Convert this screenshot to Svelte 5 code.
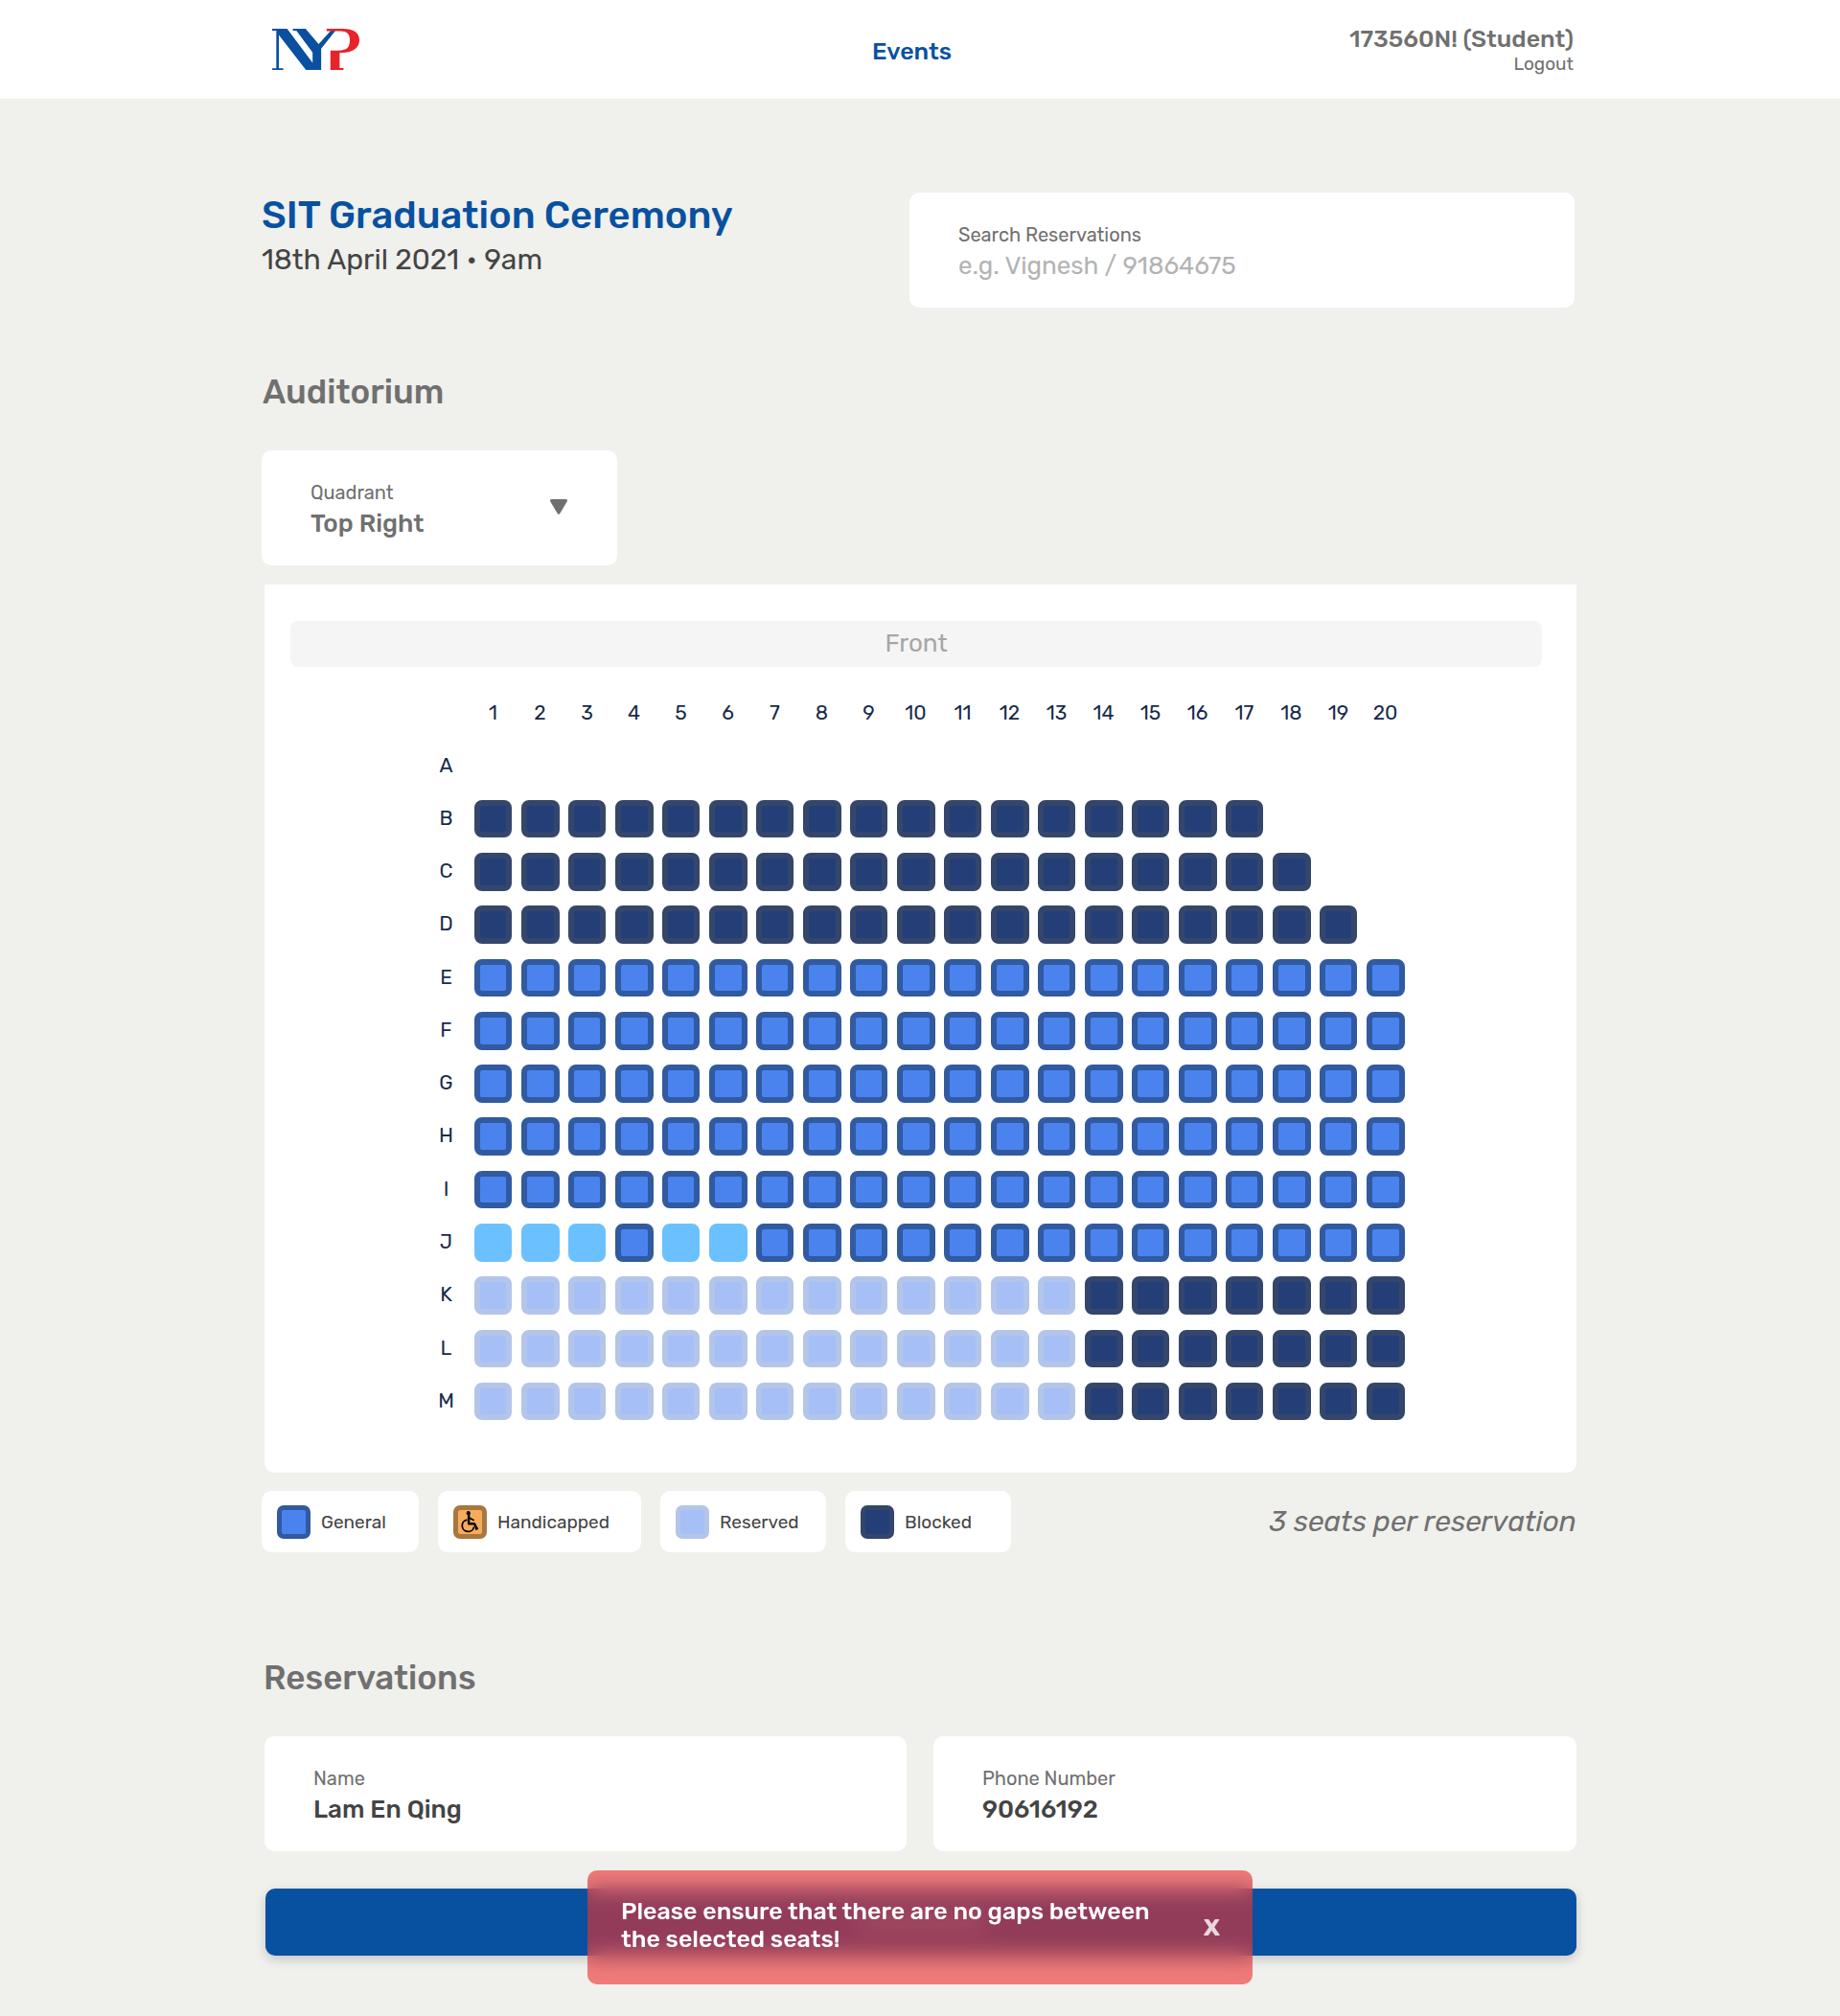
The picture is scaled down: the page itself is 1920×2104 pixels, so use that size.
<script>
  const columns = Array.from({ length: 20 }, (_, i) => i + 1);

  const fill = (kind, count) => Array(count).fill(kind);

  const rows = [
    { name: 'A', seats: [] },
    { name: 'B', seats: fill('blocked', 17) },
    { name: 'C', seats: fill('blocked', 18) },
    { name: 'D', seats: fill('blocked', 19) },
    ...['E', 'F', 'G', 'H', 'I'].map((name) => ({ name, seats: fill('general', 20) })),
    {
      name: 'J',
      seats: [
        ...fill('selected', 3),
        ...fill('general', 1),
        ...fill('selected', 2),
        ...fill('general', 14)
      ]
    },
    ...['K', 'L', 'M'].map((name) => ({
      name,
      seats: [...fill('reserved', 13), ...fill('blocked', 7)]
    }))
  ];

  const legend = [
    { kind: 'general', label: 'General' },
    { kind: 'handicapped', label: 'Handicapped' },
    { kind: 'reserved', label: 'Reserved' },
    { kind: 'blocked', label: 'Blocked' }
  ];
</script>

<div class="page">
  <header>
    <div class="bar">
      <svg class="logo" viewBox="42 29 274 129" role="img" aria-label="NYP">
        <g fill="#0b4fa1">
          <path d="M42 29H89L169 136V103L118 35H107V29H147L188 77L226 35H241L196 91V158H148L63 48V153H77V158H42V153H55V35H42Z" />
        </g>
        <path
          fill="#e8232a"
          d="M213 29H265C298 29 316 42 316 64C316 88 297 103 262 104H254V152H266V158H225V97H250C276 97 286 88 286 64C286 44 276 36 258 36H213Z"
        />
      </svg>
      <nav>Events</nav>
      <div class="account">
        <div class="user">173560N! (Student)</div>
        <div class="logout">Logout</div>
      </div>
    </div>
  </header>

  <main>
    <section class="intro">
      <div class="heading">
        <h1>SIT Graduation Ceremony</h1>
        <p class="date">18th April 2021 • 9am</p>
      </div>
      <div class="field search">
        <span class="label">Search Reservations</span>
        <span class="value placeholder">e.g. Vignesh / 91864675</span>
      </div>
    </section>

    <h2>Auditorium</h2>
    <div class="field quadrant">
      <div>
        <span class="label">Quadrant</span>
        <span class="value muted">Top Right</span>
      </div>
      <svg class="caret" viewBox="0 0 18 16">
        <path d="M2 0H16Q19 0 17.5 2.7L10.4 14.8Q9 17 7.6 14.8L0.5 2.7Q-1 0 2 0Z" fill="#707070" />
      </svg>
    </div>

    <section class="hall">
      <div class="front">Front</div>
      <div class="map">
        <div class="row numbers">
          <span></span>
          {#each columns as n}
            <span class="number">{n}</span>
          {/each}
        </div>
        {#each rows as row}
          <div class="row">
            <span class="letter">{row.name}</span>
            {#each row.seats as kind}
              <span class="seat {kind}"></span>
            {/each}
          </div>
        {/each}
      </div>
    </section>

    <section class="below">
      <div class="legend">
        {#each legend as item}
          <div class="key {item.kind}-key">
            <span class="swatch {item.kind}">
              {#if item.kind === 'handicapped'}
                <svg viewBox="654 291 72 72" fill="none" stroke="#000" stroke-width="5">
                  <circle cx="685" cy="300" r="6" fill="#000" stroke="none" />
                  <path d="M686 305V332H703L711 348" stroke-width="7" stroke-linejoin="round" />
                  <path d="M687 314L702 322" stroke-width="5" />
                  <path d="M681 320A18 18 0 1 0 702 341" stroke-width="5" />
                  <path d="M706 349L714 346" stroke-width="5" />
                </svg>
              {/if}
            </span>
            <span>{item.label}</span>
          </div>
        {/each}
      </div>
      <em>3 seats per reservation</em>
    </section>

    <h2 class="second">Reservations</h2>
    <section class="people">
      <div class="field">
        <span class="label">Name</span>
        <span class="value">Lam En Qing</span>
      </div>
      <div class="field">
        <span class="label">Phone Number</span>
        <span class="value">90616192</span>
      </div>
    </section>

    <section class="action">
      <div class="submit"><span class="sheen"></span></div>
      <div class="toast">
        <p>Please ensure that there are no gaps between the selected seats!</p>
        <span class="close">X</span>
      </div>
    </section>
  </main>
</div>

<style>
  :global(body) {
    margin: 0;
    background: #f0f0ec;
  }

  .page {
    min-height: 2104px;
    background: #f0f0ec;
    font-family: Rubik, Inter, 'Liberation Sans', sans-serif;
    color: #707070;
  }

  h1,
  h2,
  p {
    margin: 0;
    font-weight: 500;
  }

  header {
    height: 103px;
    background: #fff;
  }

  .bar {
    width: 1369px;
    margin-left: 273px;
    display: grid;
    grid-template-columns: 637px 84px 1fr;
  }

  .logo {
    width: 91px;
    height: 43px;
    margin: 30px 0 0 11px;
  }

  nav {
    margin-top: 39px;
    line-height: 30px;
    font-size: 25px;
    font-weight: 500;
    color: #0851a1;
  }

  .account {
    padding-top: 27px;
    text-align: right;
  }

  .user {
    font-size: 25px;
    line-height: 27px;
    font-weight: 500;
  }

  .logout {
    font-size: 19px;
    line-height: 25px;
  }

  main {
    width: 1372px;
    margin-left: 273px;
    padding-top: 98px;
  }

  .intro {
    display: flex;
    justify-content: space-between;
    padding-right: 2px;
  }

  .heading {
    padding-top: 1px;
  }

  h1 {
    font-size: 40px;
    line-height: 46px;
    color: #0851a1;
  }

  .date {
    font-size: 30px;
    line-height: 47px;
    letter-spacing: -0.05px;
    font-weight: 400;
    color: #444;
  }

  .field {
    box-sizing: border-box;
    height: 120px;
    padding: 32px 52px 0 51px;
    border-radius: 10px;
    background: #fff;
  }

  .search {
    width: 694px;
  }

  .label,
  .value {
    display: block;
  }

  .label {
    font-size: 20px;
    line-height: 24px;
    letter-spacing: -0.03px;
  }

  .value {
    font-size: 26px;
    line-height: 42px;
    font-weight: 500;
    color: #444;
  }

  .value.placeholder {
    font-weight: 400;
    letter-spacing: -0.04px;
    color: #b3b3b3;
  }

  .value.muted {
    color: #707070;
  }

  h2 {
    margin: 67px 0 40px 1px;
    font-size: 35px;
    line-height: 42px;
  }

  h2.second {
    margin: 110px 0 40px 2px;
  }

  .quadrant {
    width: 371px;
    display: flex;
    justify-content: space-between;
  }

  .caret {
    width: 18px;
    height: 16px;
    margin-top: 19px;
  }

  .hall {
    box-sizing: border-box;
    width: 1369px;
    height: 927px;
    margin: 20px 0 0 3px;
    padding: 38px 36px 0 27px;
    border-radius: 0 0 10px 10px;
    background: #fff;
  }

  .front {
    height: 48px;
    border-radius: 8px;
    background: #f5f5f5;
    text-align: center;
    font-size: 26px;
    line-height: 48px;
    color: #a6a6a6;
  }

  .map {
    margin: 35px 0 0 143px;
    font-size: 21px;
    color: #172b4d;
  }

  .row {
    display: grid;
    grid-template-columns: repeat(21, 49px);
    height: 55.27px;
  }

  .numbers {
    height: 48.6px;
  }

  .number,
  .letter {
    width: 39px;
    text-align: center;
  }

  .number {
    line-height: 25px;
    font-weight: 450;
  }

  .letter {
    line-height: 38px;
  }

  .seat,
  .swatch {
    box-sizing: border-box;
    border: 6px solid;
    border-radius: 8px;
  }

  .seat {
    width: 39px;
    height: 39.6px;
  }

  .seat:nth-child(odd) {
    width: 40px;
  }

  .general {
    border-color: #315aa1;
    background: #4a83ee;
  }

  .blocked {
    border-color: #34466b;
    background: #243f77;
  }

  .reserved {
    border-color: #b4c5ea;
    background: #a6bff6;
  }

  .selected {
    border-color: #6bc1ff;
    background: #6bc1ff;
  }

  .handicapped {
    border-color: #aa7640;
    background: #f6ac5c;
  }

  .below {
    display: flex;
    justify-content: space-between;
    align-items: center;
    margin-top: 19px;
    height: 64px;
  }

  .legend {
    display: flex;
    gap: 20px;
  }

  .key {
    box-sizing: border-box;
    width: 173px;
    height: 64px;
    padding-left: 15.5px;
    display: flex;
    align-items: center;
    gap: 11.5px;
    border-radius: 10px;
    background: #fff;
    font-size: 19px;
    color: #444;
  }

  .general-key {
    width: 164px;
  }

  .handicapped-key {
    width: 212px;
  }

  .swatch {
    width: 35px;
    height: 35px;
    border-width: 5px;
    border-radius: 7px;
  }

  .swatch svg {
    display: block;
    width: 25px;
    height: 25px;
  }

  em {
    font-size: 30px;
    line-height: 36px;
    letter-spacing: -0.05px;
  }

  .people {
    display: grid;
    grid-template-columns: 670px 671px;
    gap: 28px;
    margin-left: 3px;
  }

  .action {
    position: relative;
    margin-top: 39px;
    padding-left: 4px;
  }

  .submit {
    display: flex;
    align-items: center;
    justify-content: center;
    height: 70px;
    border-radius: 10px;
    background: #0851a1;
    box-shadow: 0 4px 12px rgba(0, 0, 0, 0.18);
  }

  .sheen {
    width: 136px;
    height: 14px;
    border-radius: 7px;
    background: rgba(255, 255, 255, 0.25);
  }

  .toast {
    position: absolute;
    top: -19px;
    left: 340px;
    box-sizing: border-box;
    width: 694px;
    height: 119px;
    padding: 28px 34px 0 35px;
    display: flex;
    justify-content: space-between;
    border-radius: 10px;
    background: rgba(238, 47, 44, 0.6);
    -webkit-backdrop-filter: blur(11px);
    backdrop-filter: blur(11px);
    color: #fff;
    font-size: 25px;
    line-height: 29px;
  }

  .toast p {
    width: 570px;
  }

  .close {
    margin-top: 17px;
    font-weight: 700;
    color: rgba(255, 255, 255, 0.8);
  }
</style>
